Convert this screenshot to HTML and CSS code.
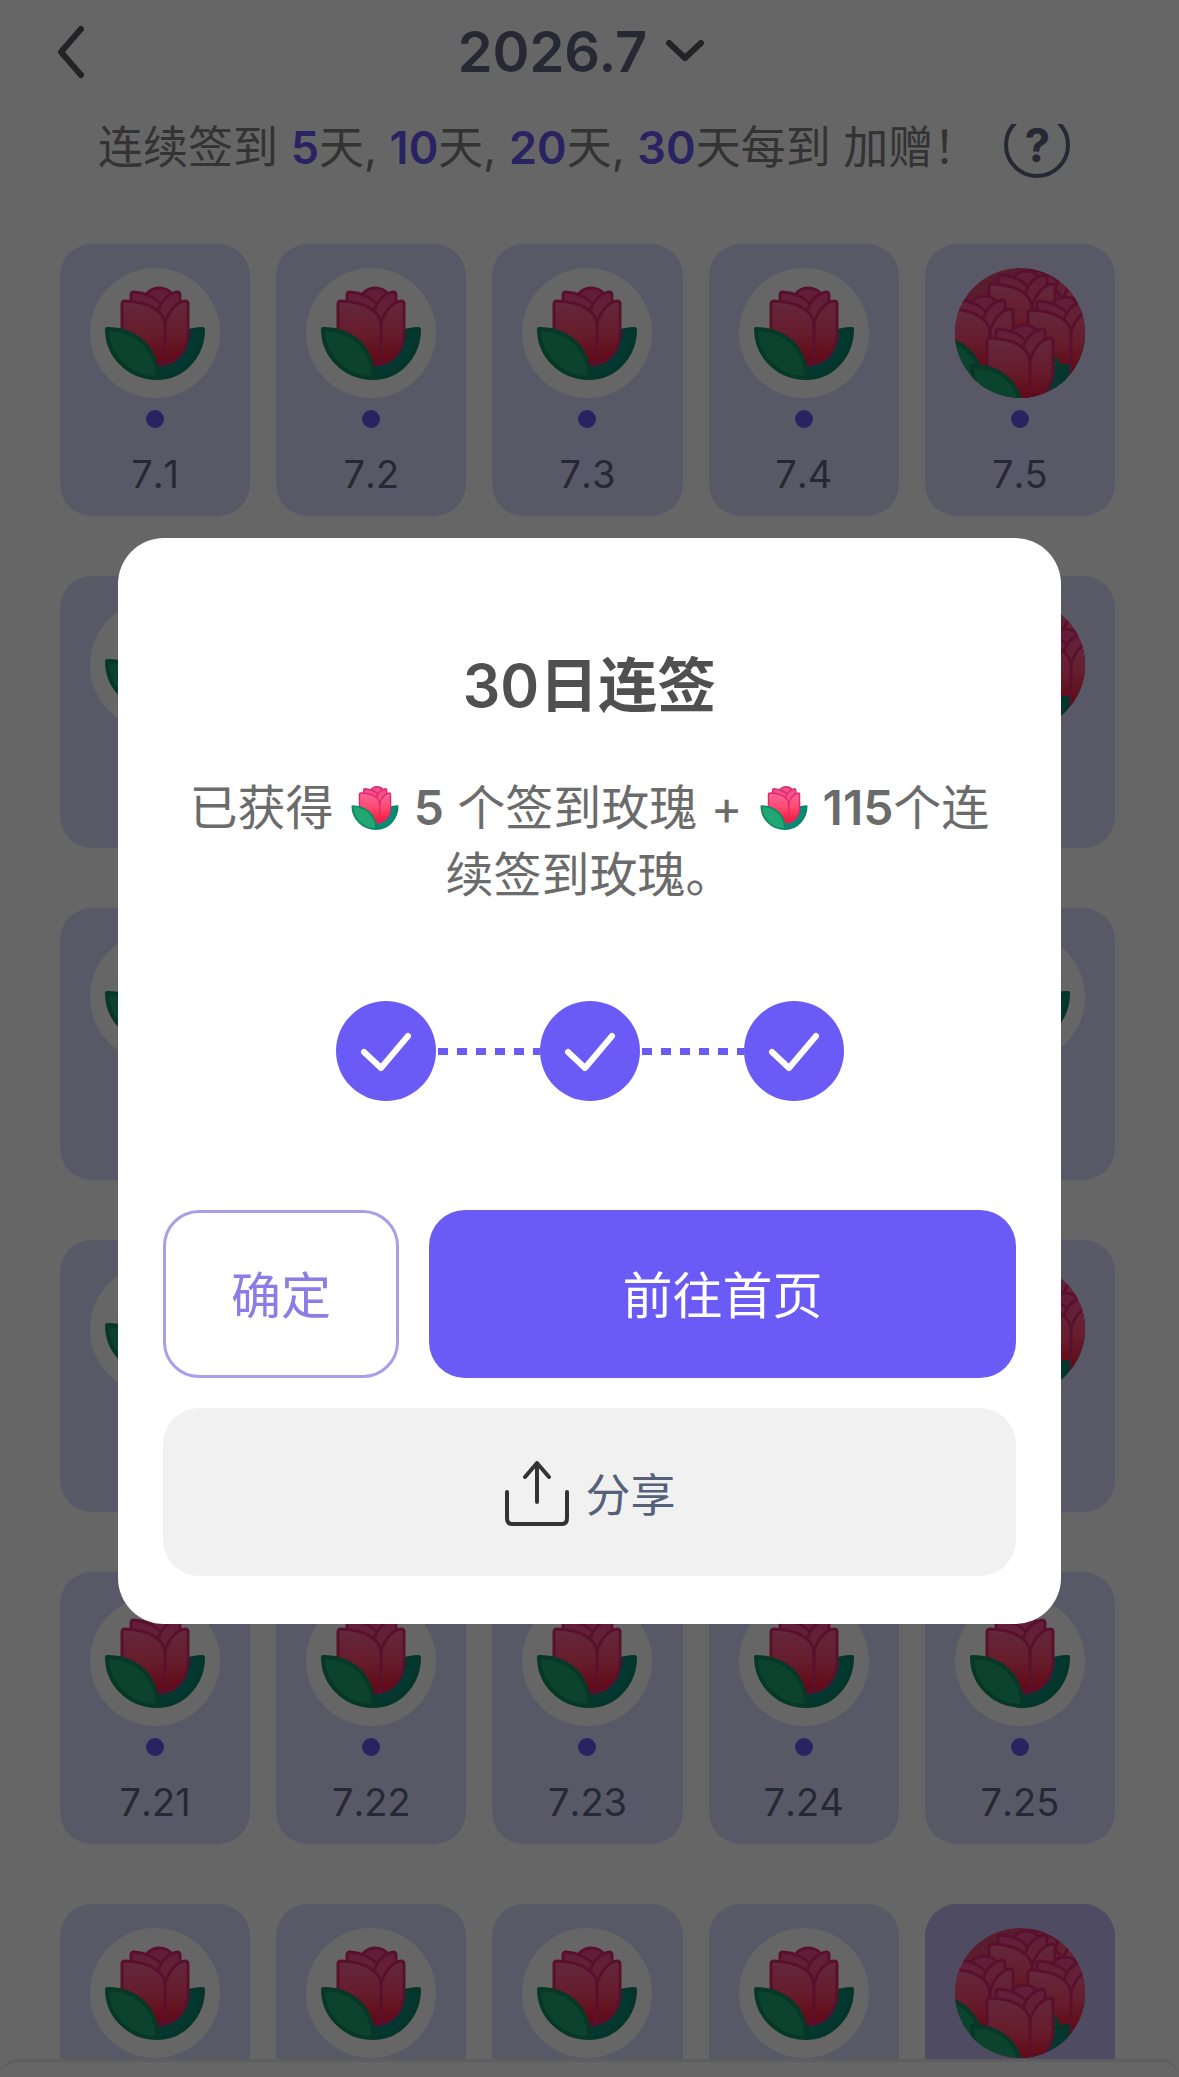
FILE: index.html
```html
<!DOCTYPE html>
<html lang="zh-CN">
    <head>
        <meta charset="utf-8">
        <title>签到日历</title>
        <meta name="viewport" content="width=device-width, initial-scale=1">
        <link rel="stylesheet" href="styles.css">
    </head>
    <body>
        <!-- shared drawings -->
        <svg class="defs" aria-hidden="true">
            <defs>
                <linearGradient id="petal" gradientUnits="userSpaceOnUse" x1="0" y1="30" x2="0" y2="98">
                    <stop offset="0" stop-color="#f9669b"/>
                    <stop offset="0.5" stop-color="#ff4a72"/>
                    <stop offset="1" stop-color="#f5102c"/>
                </linearGradient>
                <linearGradient id="crown" gradientUnits="userSpaceOnUse" x1="0" y1="19" x2="0" y2="52">
                    <stop offset="0" stop-color="#f54b94"/>
                    <stop offset="1" stop-color="#fa557c"/>
                </linearGradient>
                <g id="rose">
                    <path d="M113 61C86 61 67 82 67 110C93 110 113 88 113 61Z" fill="#0c8a76" stroke="#0a8566" stroke-width="4" stroke-linejoin="round"/>
                    <g stroke="#dc2a70" stroke-width="3" stroke-linejoin="round" stroke-linecap="round">
                        <path d="M56 27C60 21 64 20 69 20C74 20 79 22 82 26L70 40Z" fill="url(#crown)"/>
                        <path d="M41 38V27Q41 24 44 24C56 25 65 29 71 36L67 50Z" fill="url(#crown)"/>
                        <path d="M90 38V27Q90 24 87 24C78 26 71 33 68 43L74 56Z" fill="url(#crown)"/>
                        <path d="M75 56C78 43 87 34 95 33Q98 33 98 36V64C98 82 88 95 70 97L75 56Z" fill="url(#petal)"/>
                        <path d="M32 65V36Q32 33 35 33C58 34 75 42 75 58V92Q72 96 67 96L32 65Z" fill="url(#petal)"/>
                    </g>
                    <path d="M17 61C44 61 67 78 67 110C39 110 17 88 17 61Z" fill="#20a774" stroke="#108a62" stroke-width="4" stroke-linejoin="round"/>
                </g>
                <clipPath id="disc"><circle cx="65" cy="65" r="65"/></clipPath>
                <g id="bouquet" clip-path="url(#disc)">
                    <rect width="130" height="130" fill="#e04a70"/>
                    <use href="#rose" x="32" y="-22"/>
                    <use href="#rose" x="2" y="-17"/>
                    <use href="#rose" x="-40" y="8"/>
                    <use href="#rose" x="41" y="9"/>
                    <use href="#rose" x="0" y="37"/>
                </g>
            </defs>
        </svg>

        <div class="page">
            <header class="topbar">
                <button class="back" type="button" aria-label="返回">
                    <svg width="28" height="54" viewBox="0 0 28 54"><path d="M25 4L5 27L25 50"/></svg>
                </button>
                <button class="month" type="button">
                    <span>2026.7</span>
                    <svg width="40" height="24" viewBox="0 0 40 24"><path d="M4 3L20 18L36 3"/></svg>
                </button>
            </header>
            <div class="notice">
                <p>连续签到 <b>5</b>天, <b>10</b>天, <b>20</b>天, <b>30</b>天每到 加赠！</p>
                <button class="help" type="button" aria-label="帮助">
                    <svg width="66" height="54" viewBox="0 0 66 54"><circle cx="33" cy="21" r="31"/></svg>
                    <span>?</span>
                </button>
            </div>
            <main class="calendar" id="calendar"></main>
        </div>
        <div class="sheet"></div>

        <div class="overlay">
            <div class="modal" role="dialog" aria-modal="true" aria-labelledby="modal-title">
                <h1 id="modal-title">30日连签</h1>
                <p class="reward">已获得 <svg class="rose" viewBox="14 17 102 96"><use href="#rose"/></svg> <b>5</b> 个签到玫瑰 + <svg class="rose" viewBox="14 17 102 96"><use href="#rose"/></svg> <b>115</b>个连续签到玫瑰。</p>
                <div class="steps">
                    <svg class="step" viewBox="0 0 100 100"><circle cx="50" cy="50" r="50"/><path d="M28 51L45 67L72 35"/></svg>
                    <span class="line"></span>
                    <svg class="step" viewBox="0 0 100 100"><circle cx="50" cy="50" r="50"/><path d="M28 51L45 67L72 35"/></svg>
                    <span class="line"></span>
                    <svg class="step" viewBox="0 0 100 100"><circle cx="50" cy="50" r="50"/><path d="M28 51L45 67L72 35"/></svg>
                </div>
                <div class="actions">
                    <button class="btn ok" type="button">确定</button>
                    <button class="btn home" type="button">前往首页</button>
                    <button class="btn share" type="button">
                        <svg width="66" height="68" viewBox="0 0 66 68"><path d="M4 34V60Q4 66 9 66H59Q64 66 64 60V34M34 44V5M22 19L34 5L46 19"/></svg>
                        <span>分享</span>
                    </button>
                </div>
            </div>
        </div>

        <script>
            // days that give a whole bouquet
            const bonusDays = [5, 10, 20, 30];
            let html = "";
            for (let day = 1; day <= 30; day++) {
                const bonus = bonusDays.includes(day);
                html += `<div class="day${day == 30 ? " last" : ""}">
                            <svg class="badge" viewBox="0 0 130 130">
                                <circle cx="65" cy="65" r="65"/>
                                <use href="#${bonus ? "bouquet" : "rose"}"/>
                            </svg>
                            <span class="dot"></span>
                            <span class="date">7.${day}</span>
                        </div>`;
            }
            document.getElementById("calendar").innerHTML = html;
        </script>
    </body>
</html>
```
FILE: styles.css
```css
* {
    box-sizing: border-box;
}
body {
    margin: 0;
    height: 100vh;
    overflow: hidden;
    background-color: #ffffff;
    font-family: Inter, "Noto Sans CJK SC", sans-serif;
    color: #5f6780;
}
button {
    font: inherit;
    color: inherit;
    background: none;
    border: 0;
    padding: 0;
    cursor: pointer;
}
p, h1 {
    margin: 0;
}
.defs {
    position: absolute;
    width: 0;
    height: 0;
}

/* header */
.topbar {
    display: grid;
    grid-template-columns: 1fr auto 1fr;
    align-items: center;
    padding: 14px 72px 0 56px;
    height: 90px;
}
.topbar path {
    fill: none;
    stroke: #57575c;
    stroke-width: 6;
    stroke-linecap: round;
    stroke-linejoin: round;
}
.back {
    display: flex;
}
.month {
    display: flex;
    align-items: center;
    gap: 18px;
    font-size: 56px;
    line-height: 72px;
    font-weight: 600;
}
.notice {
    display: flex;
    align-items: center;
    gap: 26px;
    padding: 8px 0 0 98px;
    height: 114px;
    font-size: 45px;
    line-height: 60px;
    color: #808080;
}
.notice p {
    padding-bottom: 6px;
}
.notice b {
    font-weight: 600;
    color: #6a59f5;
}
.help {
    position: relative;
    display: flex;
    color: #5f6780;
}
.help circle {
    fill: none;
    stroke: #5f6780;
    stroke-width: 4;
}
.help span {
    position: absolute;
    inset: 0;
    font-size: 46px;
    line-height: 42px;
    font-weight: 700;
}

/* calendar */
.calendar {
    display: grid;
    grid-template-columns: repeat(5, 1fr);
    gap: 60px 26px;
    padding: 40px 64px 0 60px;
}
.day {
    display: flex;
    flex-direction: column;
    align-items: center;
    height: 272px;
    padding-top: 24px;
    border-radius: 32px;
    background-color: #dfdcff;
}
.day.last {
    background-color: #c4bbf6;
}
.badge {
    width: 130px;
    height: 130px;
}
.badge circle {
    fill: #ffffff;
}
.dot {
    width: 18px;
    height: 18px;
    margin-top: 12px;
    border-radius: 50%;
    background-color: #6a59f5;
}
.date {
    margin-top: 21px;
    font-size: 38px;
    line-height: 50px;
    font-kerning: none;
}
.sheet {
    position: fixed;
    left: 0;
    right: 0;
    bottom: 0;
    height: 18px;
    border-top: 3px solid #ebebeb;
    border-radius: 48px 48px 0 0;
    background-color: #ffffff;
}

/* popup */
.overlay {
    position: fixed;
    inset: 0;
    display: flex;
    align-items: flex-start;
    justify-content: center;
    padding-top: 538px;
    background-color: rgba(0, 0, 0, 0.6);
}
.modal {
    width: 80%;
    padding: 108px 45px 48px;
    border-radius: 46px;
    background-color: #ffffff;
    text-align: center;
}
.modal h1 {
    font-size: 59px;
    line-height: 80px;
    font-weight: 600;
    color: #505050;
}
.reward {
    margin-top: 48px;
    padding: 0 20px;
    font-size: 48px;
    line-height: 67px;
    color: #6b6b6b;
}
.reward b {
    font-weight: 600;
}
.rose {
    width: 48px;
    height: 46px;
    margin: 0 1px 0 4px;
    vertical-align: -6px;
}
.steps {
    display: flex;
    align-items: center;
    justify-content: center;
    margin-top: 93px;
}
.step {
    width: 100px;
    height: 100px;
}
.step circle {
    fill: #6b5bf6;
}
.step path {
    fill: none;
    stroke: #ffffff;
    stroke-width: 6;
    stroke-linecap: round;
    stroke-linejoin: round;
}
.line {
    width: 104px;
    height: 7px;
    background: repeating-linear-gradient(to right, transparent 0 2px, #6b5bf6 2px 12px, transparent 12px 19px);
}
.actions {
    display: grid;
    grid-template-columns: 236px 1fr;
    gap: 30px;
    margin-top: 109px;
}
.btn {
    display: flex;
    align-items: center;
    justify-content: center;
    height: 168px;
    border-radius: 36px;
    font-size: 50px;
}
.ok, .home {
    padding-bottom: 5px;
}
.ok {
    border: 3px solid #a99ee8;
    color: #8a7de8;
}
.home {
    background-color: #6b5bf6;
    color: #ffffff;
}
.share {
    grid-column: 1 / 3;
    gap: 16px;
    background-color: #f1f1f1;
    color: #566079;
    font-size: 45px;
}
.share path {
    fill: none;
    stroke: #333333;
    stroke-width: 4;
    stroke-linecap: round;
    stroke-linejoin: round;
}
```
